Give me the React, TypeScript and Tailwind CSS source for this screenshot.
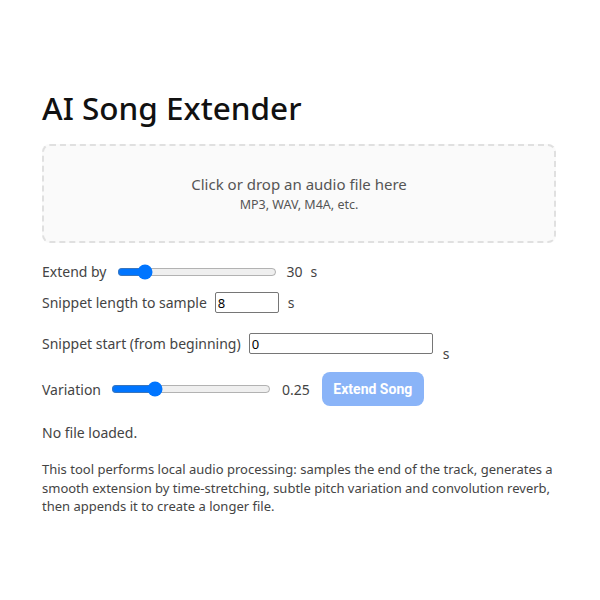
import React from "react";

export default function App() {
  return (
    <div className="min-h-[600px] w-[600px] bg-white px-[42px] pt-[87px] text-[#444]" style={{ fontFamily: '"Noto Sans", sans-serif' }}>
      <h1 className="m-0 text-[31.5px] font-medium leading-[41px] text-[#111]">AI Song Extender</h1>
      <div className="mt-[16px] flex h-[99px] w-[514px] flex-col items-center justify-center rounded-lg border-2 border-dashed border-[#e0e0e0] bg-[#fafafa]">
        <div className="text-[15px] leading-[20px] text-[#555]">Click or drop an audio file here</div>
        <div className="mt-[2px] text-[12.5px] leading-[17px] text-[#555]">MP3, WAV, M4A, etc.</div>
      </div>

      <div className="mt-[18px] flex h-[21px] items-center text-[14px]">
        <span>Extend by</span>
        <input type="range" min={5} max={180} defaultValue={30} className="ml-[10px] w-[160px]" />
        <span className="ml-[10px]">30</span>
        <span className="ml-[8px]">s</span>
      </div>

      <div className="mt-[10px] flex h-[21px] items-center text-[14px]">
        <span>Snippet length to sample</span>
        <input type="text" defaultValue="8" className="ml-[8px] h-[21px] w-[64px] rounded-[2px] border border-[#767676] px-[2px] text-[13px] text-black outline-none" />
        <span className="ml-[9px]">s</span>
      </div>

      <div className="mt-[20px] flex items-start text-[14px]">
        <span className="leading-[21px]">Snippet start (from beginning)</span>
        <input type="text" defaultValue="0" className="ml-[8px] h-[21px] w-[184px] rounded-[2px] border border-[#767676] px-[2px] text-[13px] text-black outline-none" />
        <span className="ml-[10px] mt-[10px] leading-[21px]">s</span>
      </div>

      <div className="mt-[8px] flex items-center text-[14px]">
        <span>Variation</span>
        <input type="range" min={0} max={1} step={0.01} defaultValue={0.25} className="ml-[10px] w-[160px]" />
        <span className="ml-[11px]">0.25</span>
        <button disabled className="ml-[12px] h-[34px] w-[102px] rounded-lg bg-[#8ab4f8] text-[14px] font-bold text-white" style={{ fontFamily: 'Roboto, sans-serif' }}>Extend Song</button>
      </div>

      <div className="mt-[17px] text-[14px] leading-[20px]">No file loaded.</div>

      <p className="mt-[17px] w-[516px] text-[13px] leading-[18.5px] text-[#444]">
        This tool performs local audio processing: samples the end of the track, generates a smooth extension by time-stretching, subtle pitch variation and convolution reverb, then appends it to create a longer file.
      </p>
    </div>
  );
}
